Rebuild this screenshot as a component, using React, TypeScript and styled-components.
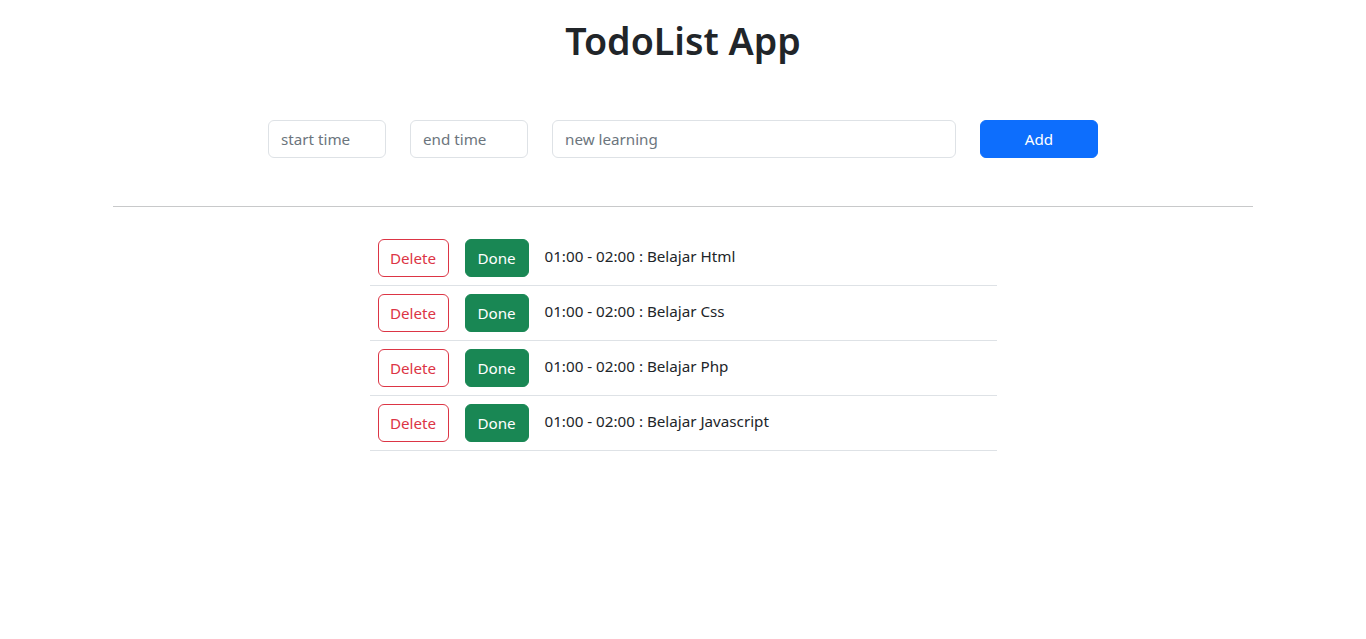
import React from "react";
import styled, { createGlobalStyle } from "styled-components";

const Global = createGlobalStyle`
  * { box-sizing: border-box; }
  body {
    margin: 0;
    background: #fff;
    color: #212529;
    font-family: "Segoe UI", "Noto Sans", "Open Sans", sans-serif;
    font-size: 15.2px;
    line-height: 1.5;
  }
`;

const Page = styled.div`
  display: flex;
  flex-direction: column;
  align-items: center;
  padding-top: 17px;
`;

const Title = styled.h1`
  margin: 0;
  font-size: 37.6px;
  font-weight: 600;
  line-height: 48px;
  color: #212529;
`;

const Form = styled.form`
  display: flex;
  gap: 24px;
  margin-top: 55px;
`;

const Input = styled.input<{ $w: number }>`
  width: ${(p) => p.$w}px;
  height: 38px;
  padding: 6px 12px;
  font: inherit;
  color: #212529;
  border: 1px solid #dee2e6;
  border-radius: 6px;
  outline: none;
  &::placeholder { color: #6c757d; }
`;

const AddButton = styled.button`
  width: 118px;
  height: 38px;
  border: 1px solid #0d6efd;
  background: #0d6efd;
  color: #fff;
  font: inherit;
  border-radius: 6px;
`;

const Rule = styled.hr`
  width: 1140px;
  margin: 48px 0 24px;
  border: 0;
  border-top: 1px solid #c8c9ca;
`;

const List = styled.ul`
  width: 627px;
  margin: 0;
  padding: 0;
  list-style: none;
`;

const Row = styled.li`
  display: flex;
  align-items: center;
  gap: 16px;
  padding: 8px;
  border-bottom: 1px solid #dee2e6;
`;

const Btn = styled.button<{ $variant: "delete" | "done"; $w: number }>`
  width: ${(p) => p.$w}px;
  height: 38px;
  padding: 0;
  font: inherit;
  border-radius: 6px;
  border: 1px solid ${(p) => (p.$variant === "delete" ? "#dc3545" : "#198754")};
  background: ${(p) => (p.$variant === "delete" ? "#fff" : "#198754")};
  color: ${(p) => (p.$variant === "delete" ? "#dc3545" : "#fff")};
`;

const ItemText = styled.span`
  margin-top: -4px;
  color: #212529;
`;

const items = ["Belajar Html", "Belajar Css", "Belajar Php", "Belajar Javascript"];

export default function App() {
  return (
    <>
      <Global />
      <Page>
        <Title>TodoList App</Title>
        <Form onSubmit={(e) => e.preventDefault()}>
          <Input $w={118} placeholder="start time" />
          <Input $w={118} placeholder="end time" />
          <Input $w={404} placeholder="new learning" />
          <AddButton type="submit">Add</AddButton>
        </Form>
        <Rule />
        <List>
          {items.map((t) => (
            <Row key={t}>
              <Btn $variant="delete" $w={71}>Delete</Btn>
              <Btn $variant="done" $w={64}>Done</Btn>
              <ItemText>01:00 - 02:00 : {t}</ItemText>
            </Row>
          ))}
        </List>
      </Page>
    </>
  );
}
